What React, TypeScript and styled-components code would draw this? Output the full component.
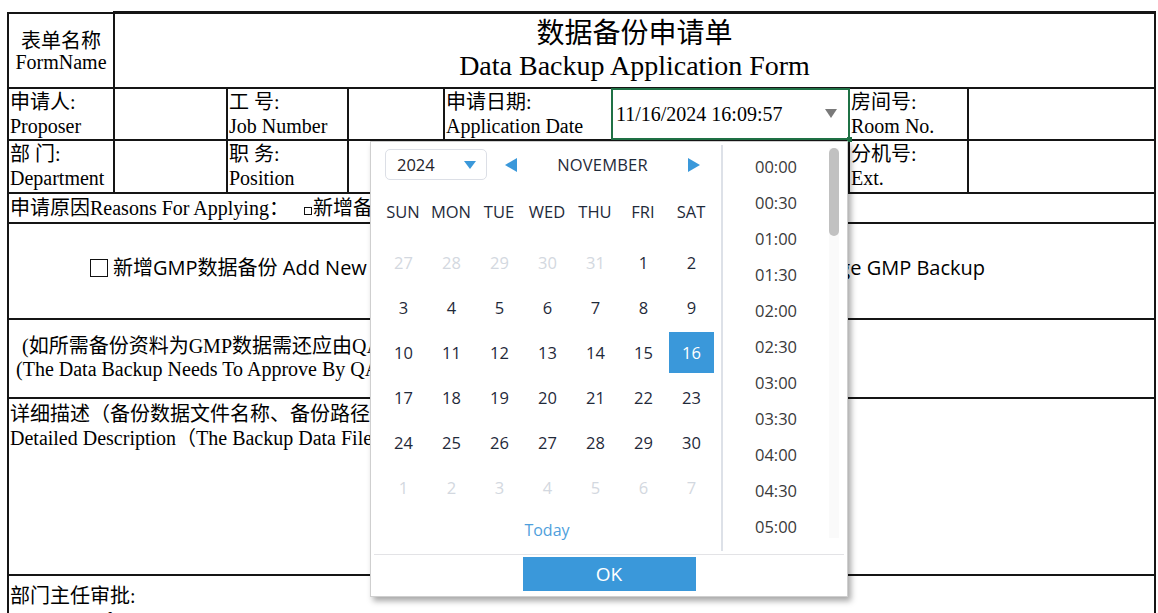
import React from 'react';
import styled, { createGlobalStyle } from 'styled-components';

const GlobalStyle = createGlobalStyle`
  html, body {
    margin: 0;
    padding: 0;
    background: #fff;
    overflow: hidden;
  }
  body {
    font-family: "Liberation Serif", "Noto Sans CJK SC", serif;
    color: #000;
  }
`;

const Page = styled.div`
  position: relative;
  width: 1158px;
  height: 613px;
  overflow: hidden;
  padding: 11px 0 0 7px;
  box-sizing: border-box;
`;

const Sheet = styled.table`
  border-collapse: collapse;
  table-layout: fixed;
  width: 1147px;
  font-size: 20px;
  line-height: 24px;
`;

const Row = styled.tr<{ $h: number }>`
  height: ${p => p.$h}px;
`;

const Cell = styled.td<{ $align?: string; $valign?: string; $thickTop?: boolean }>`
  border: 2px solid #151515;
  ${p => (p.$thickTop ? 'border-top-width: 3px;' : '')}
  padding: 0 1px;
  text-align: ${p => p.$align || 'left'};
  vertical-align: ${p => p.$valign || 'middle'};
  white-space: nowrap;
  overflow: hidden;
`;

const Line = styled.div<{ $indent?: number }>`
  padding-left: ${p => p.$indent || 0}px;
`;

const FormName = styled.div`
  line-height: 21px;
  padding-top: 4px;
`;

const Title = styled.div`
  font-size: 28px;
  line-height: 32px;
`;

const Options = styled.div`
  display: flex;
  justify-content: space-between;
  padding: 0 168px 5px 80px;
  font-family: "Open Sans", "Noto Sans CJK SC", sans-serif;
  font-size: 20px;
`;

const Tick = styled.span<{ $size: number }>`
  display: inline-block;
  width: ${p => p.$size}px;
  height: ${p => p.$size}px;
  border: ${p => (p.$size > 12 ? '1.5px' : '1px')} solid #111;
  box-sizing: border-box;
  vertical-align: ${p => (p.$size > 12 ? '-2px' : '0px')};
  margin-right: ${p => (p.$size > 12 ? 5 : 1)}px;
`;

const DateWrap = styled.div`
  position: relative;
  height: 50px;
  display: flex;
  align-items: center;
  padding-left: 3px;
`;

const Selection = styled.div`
  position: absolute;
  left: -2px;
  right: -2px;
  top: -1px;
  bottom: -1px;
  border: 2px solid #1f7145;
  pointer-events: none;

  &::after {
    content: '';
    position: absolute;
    right: -4px;
    bottom: -4px;
    width: 5px;
    height: 5px;
    background: #1f7145;
  }
`;

const Caret = styled.span`
  margin-left: auto;
  margin-right: 11px;
  width: 0;
  height: 0;
  border-left: 6px solid transparent;
  border-right: 6px solid transparent;
  border-top: 9px solid #7a7a7a;
`;

/* ---------- date picker ---------- */

const Picker = styled.div`
  position: absolute;
  left: 370px;
  top: 141px;
  width: 478px;
  height: 456px;
  box-sizing: border-box;
  background: #fff;
  border: 1px solid #cfcfcf;
  box-shadow: 3px 4px 6px rgba(0, 0, 0, 0.35);
  font-family: "Open Sans", "Noto Sans", sans-serif;
  display: flex;
  flex-direction: column;
`;

const PickerBody = styled.div`
  display: flex;
  padding: 3px 2px 0;
  height: 406px;
`;

const Calendar = styled.div`
  width: 350px;
  padding: 0 6px;
  box-sizing: border-box;
  border-right: 2px solid #dde1e8;
  display: flex;
  flex-direction: column;
`;

const Header = styled.div`
  display: flex;
  align-items: center;
  margin-top: 4px;
  height: 31px;
`;

const YearSelect = styled.div`
  margin-left: 6px;
  width: 102px;
  height: 31px;
  box-sizing: border-box;
  border: 1px solid #dcdfe6;
  border-radius: 5px;
  display: flex;
  align-items: center;
  padding: 0 10px 0 11px;
  font-size: 16.5px;
  color: #1f2329;
`;

const Arrow = styled.span<{ $dir: 'left' | 'right' | 'down' }>`
  width: 0;
  height: 0;
  ${p =>
    p.$dir === 'down'
      ? `margin-left: auto;
         border-left: 6px solid transparent;
         border-right: 6px solid transparent;
         border-top: 8px solid #3a98da;`
      : p.$dir === 'left'
        ? `margin-left: 18px;
           border-top: 7px solid transparent;
           border-bottom: 7px solid transparent;
           border-right: 12px solid #3a98da;`
        : `margin-right: 15px;
           border-top: 7px solid transparent;
           border-bottom: 7px solid transparent;
           border-left: 12px solid #3a98da;`}
`;

const Month = styled.div`
  flex: 1;
  text-align: center;
  font-size: 16.5px;
  color: #1f2a3a;
  letter-spacing: 0.2px;
`;

const Grid = styled.div<{ $rowH: number; $top: number }>`
  display: grid;
  grid-template-columns: repeat(7, 48px);
  grid-auto-rows: ${p => p.$rowH}px;
  margin-top: ${p => p.$top}px;
`;

const WeekDay = styled.div`
  display: flex;
  align-items: center;
  justify-content: center;
  font-size: 16.5px;
  color: #1f2a3a;
`;

const Day = styled.div<{ $muted?: boolean; $active?: boolean }>`
  display: flex;
  align-items: center;
  justify-content: center;

  span {
    width: 45px;
    height: 41px;
    margin-left: 1px;
    display: flex;
    align-items: center;
    justify-content: center;
    font-size: 16.5px;
    color: ${p => (p.$active ? '#fff' : p.$muted ? '#d3d8e0' : '#1f2a3a')};
    background: ${p => (p.$active ? '#3a98da' : 'transparent')};
  }
`;

const TodayLink = styled.div`
  height: 40px;
  display: flex;
  align-items: center;
  justify-content: center;
  font-size: 16px;
  color: #4f9fdc;
`;

const TimePanel = styled.div`
  flex: 1;
  display: flex;
  margin: 3px 6px 0 0;
  height: 390px;
`;

const TimeList = styled.div`
  flex: 1;
  overflow: hidden;
`;

const ScrollTrack = styled.div`
  width: 10px;
  background: #fafafa;
`;

const ScrollThumb = styled.div`
  height: 88px;
  border-radius: 5px;
  background: #c1c1c1;
`;

const TimeItem = styled.div`
  height: 36px;
  display: flex;
  align-items: center;
  justify-content: center;
  font-size: 16.5px;
  color: #3a3a3a;
`;

const Footer = styled.div`
  margin: 3px 3px 0;
  border-top: 1.5px solid #e3e3e6;
  display: flex;
  justify-content: center;
  padding-top: 2px;
`;

const OkButton = styled.button`
  width: 173px;
  height: 34px;
  border: none;
  background: #3a98da;
  color: #fff;
  font-family: "Open Sans", "Noto Sans", sans-serif;
  font-size: 19px;
  padding: 0;
`;

const weekDays = ['SUN', 'MON', 'TUE', 'WED', 'THU', 'FRI', 'SAT'];

const buildDays = () => {
  const days: { n: number; muted: boolean }[] = [];
  [27, 28, 29, 30, 31].forEach(n => days.push({ n, muted: true }));
  for (let i = 1; i <= 30; i++) days.push({ n: i, muted: false });
  for (let i = 1; i <= 7; i++) days.push({ n: i, muted: true });
  return days;
};

// only the slots that fit in the visible part of the list
const times = Array.from({ length: 11 }, (_, i) => {
  const h = String(Math.floor(i / 2)).padStart(2, '0');
  return `${h}:${i % 2 ? '30' : '00'}`;
});

const DatePicker = () => (
  <Picker>
    <PickerBody>
      <Calendar>
        <Header>
          <YearSelect>
            2024
            <Arrow $dir="down" />
          </YearSelect>
          <Arrow $dir="left" />
          <Month>NOVEMBER</Month>
          <Arrow $dir="right" />
        </Header>
        <Grid $rowH={36} $top={13}>
          {weekDays.map(d => (
            <WeekDay key={d}>{d}</WeekDay>
          ))}
        </Grid>
        <Grid $rowH={45} $top={11}>
          {buildDays().map((d, i) => (
            <Day key={i} $muted={d.muted} $active={!d.muted && d.n === 16}>
              <span>{d.n}</span>
            </Day>
          ))}
        </Grid>
        <TodayLink>Today</TodayLink>
      </Calendar>
      <TimePanel>
        <TimeList>
          {times.map(t => (
            <TimeItem key={t}>{t}</TimeItem>
          ))}
        </TimeList>
        <ScrollTrack>
          <ScrollThumb />
        </ScrollTrack>
      </TimePanel>
    </PickerBody>
    <Footer>
      <OkButton>OK</OkButton>
    </Footer>
  </Picker>
);

export default function App() {
  return (
    <>
      <GlobalStyle />
      <Page>
        <Sheet>
          <colgroup>
            <col style={{ width: 106 }} />
            <col style={{ width: 113 }} />
            <col style={{ width: 121 }} />
            <col style={{ width: 96 }} />
            <col style={{ width: 168 }} />
            <col style={{ width: 237 }} />
            <col style={{ width: 119 }} />
            <col style={{ width: 187 }} />
          </colgroup>
          <tbody>
            <Row $h={75}>
              <Cell $align="center">
                <FormName>
                  表单名称
                  <br />
                  FormName
                </FormName>
              </Cell>
              <Cell colSpan={7} $align="center" $thickTop>
                <Title>数据备份申请单</Title>
                <Title>Data Backup Application Form</Title>
              </Cell>
            </Row>
            <Row $h={52}>
              <Cell>
                <div>申请人:</div>
                <div>Proposer</div>
              </Cell>
              <Cell />
              <Cell>
                <div>工 号:</div>
                <div>Job Number</div>
              </Cell>
              <Cell />
              <Cell>
                <div>申请日期:</div>
                <div>Application Date</div>
              </Cell>
              <Cell style={{ padding: 0, overflow: 'visible' }}>
                <DateWrap>
                  11/16/2024 16:09:57
                  <Caret />
                  <Selection />
                </DateWrap>
              </Cell>
              <Cell>
                <div>房间号:</div>
                <div>Room No.</div>
              </Cell>
              <Cell />
            </Row>
            <Row $h={53}>
              <Cell>
                <div>部 门:</div>
                <div>Department</div>
              </Cell>
              <Cell />
              <Cell>
                <div>职 务:</div>
                <div>Position</div>
              </Cell>
              <Cell />
              <Cell />
              <Cell />
              <Cell>
                <div>分机号:</div>
                <div>Ext.</div>
              </Cell>
              <Cell />
            </Row>
            <Row $h={30}>
              <Cell colSpan={8}>
                申请原因Reasons For Applying：&nbsp;&nbsp;&nbsp;<Tick $size={8} />新增备份 Add New Backup&nbsp;&nbsp;
                <Tick $size={8} />变更备份 Change Backup
              </Cell>
            </Row>
            <Row $h={96}>
              <Cell colSpan={8}>
                <Options>
                  <span>
                    <Tick $size={18} />新增GMP数据备份 Add New GMP Backup
                  </span>
                  <span>
                    <Tick $size={18} />变更GMP数据备份 Change GMP Backup
                  </span>
                </Options>
              </Cell>
            </Row>
            <Row $h={79}>
              <Cell colSpan={8} style={{ lineHeight: '23px' }}>
                <Line $indent={12}>(如所需备份资料为GMP数据需还应由QA审批)</Line>
                <Line $indent={6}>(The Data Backup Needs To Approve By QA If It Is GMP Data)</Line>
              </Cell>
            </Row>
            <Row $h={177}>
              <Cell colSpan={8} $valign="top" style={{ paddingTop: 3 }}>
                <div>详细描述（备份数据文件名称、备份路径、备份频率等）</div>
                <div>Detailed Description（The Backup Data File Name, Backup Path, Frequency）</div>
              </Cell>
            </Row>
            <Row $h={60}>
              <Cell colSpan={8} $valign="top" style={{ paddingTop: 8 }}>
                <div>部门主任审批:</div>
                <div>Approval Of Department Director:</div>
              </Cell>
            </Row>
          </tbody>
        </Sheet>
        <DatePicker />
      </Page>
    </>
  );
}
